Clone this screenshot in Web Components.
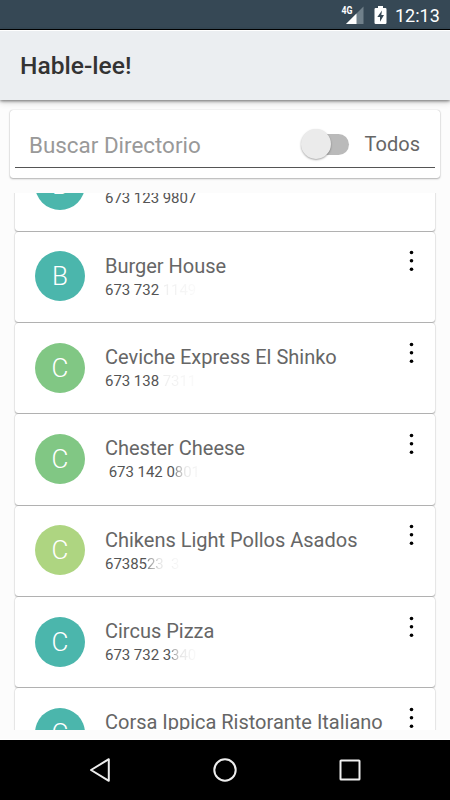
<!DOCTYPE html>
<html lang="es"><head><meta charset="utf-8"><title>Hable-lee!</title>
<style>html,body{margin:0;height:800px;overflow:hidden;background:#fcfcfc}body{font-family:Roboto,"Liberation Sans",sans-serif}</style></head>
<body><phone-screen></phone-screen>
<script>
const define = (name, html, setup) => {
  const t = document.createElement('template');
  t.innerHTML = html;
  customElements.define(name, class extends HTMLElement {
    connectedCallback() {
      if (this.shadowRoot) return;
      this.attachShadow({mode: 'open'}).append(t.content.cloneNode(true));
      if (setup) setup(this, this.shadowRoot);
    }
  });
};

define('status-bar', `<style>
:host{display:flex;background:#364855;border-bottom:1px solid #000;color:#fff;justify-content:flex-end;align-items:flex-start;box-sizing:border-box;height:30px;padding-right:10px}
svg{display:block}
.sig{margin-right:10px}.bat{margin:6px 8px 0 0}
span{font-size:18px;line-height:32px;font-weight:400;width:45px;white-space:nowrap}
</style>
<svg class="sig" width="24" height="29" viewBox="0 0 24 29"><path d="M23.5 6.5V24H6Z" fill="#70808a"/><path d="M16.5 13.5V24H6Z" fill="#fff"/><text x="1.5" y="13.7" font-size="10.5" font-weight="700" textLength="11" lengthAdjust="spacingAndGlyphs" fill="#fff">4G</text></svg>
<svg class="bat" width="13" height="19" viewBox="0 0 13 19"><path d="M4 0h5v2h2.3Q12.5 2 12.5 3.2V16.8Q12.5 18 11.3 18H1.7Q.5 18 .5 16.8V3.2Q.5 2 1.7 2H4Z" fill="#fff"/><path d="M8 4.5 3.3 11H6V15.7L10 9H7.3Z" fill="#364855"/></svg>
<span>12:13</span>`);

define('app-bar', `<style>
:host{display:flex;position:relative;align-items:center;height:70px;box-sizing:border-box;padding:0 20px 1px;background:#ebeef1;border-top:1px solid #fff;box-shadow:0 1px 3px rgba(0,0,0,.5),0 3px 6px rgba(0,0,0,.13);color:#333;font-size:24.6px;font-weight:500;white-space:nowrap}
</style><slot></slot>`);

define('toggle-switch', `<style>
:host{display:grid;width:50px;height:32px;align-items:center}
i,b{grid-area:1/1;display:block}
i{width:38px;height:21px;border-radius:11px;background:#bababa;justify-self:end;margin-right:2px}
b{width:30px;height:30px;border-radius:50%;background:#ebebeb;box-shadow:0 1px 2px rgba(0,0,0,.35);z-index:1}
</style><i></i><b></b>`);

define('search-card', `<style>
:host{display:block;margin:10px 10px 0;height:68px;box-sizing:border-box;padding:0 5px;background:#fff;border-radius:3px;box-shadow:0 0 1px rgba(0,0,0,.3),0 1px 2px rgba(0,0,0,.28)}
div{display:flex;align-items:center;border-bottom:1px solid #555;box-sizing:border-box;height:58px;padding:12px 15px 0 14px;white-space:nowrap}
.h{color:#999;font-size:22.4px;flex:1}
toggle-switch{margin-top:-1px}
.t{color:#666;font-size:20px;margin-left:14px;margin-top:-2px}
</style><div><span class="h">Buscar Directorio</span><toggle-switch></toggle-switch><span class="t">Todos</span></div>`);

define('contact-card', `<style>
:host{display:flex;flex:none;height:90.3px;box-sizing:border-box;background:#fff;border-radius:3px;box-shadow:0 0 1px rgba(0,0,0,.3),0 1px 1.5px rgba(0,0,0,.3);padding:20px 20px 0}
.a{width:50px;height:50px;border-radius:50%;color:#fff;font-size:26px;font-weight:300;line-height:51px;text-align:center;flex:none;margin-top:-.4px}
.m{flex:1;margin-left:20px;white-space:nowrap}
.n{font-size:20px;line-height:24px;height:24px;margin-top:2px;color:#666;letter-spacing:-.01px}
.p{font-size:15px;line-height:20px;margin-top:2px;color:#555;white-space:pre;letter-spacing:-.04px}
.f{color:transparent;background-clip:text;-webkit-background-clip:text}
svg{display:block;flex:none;margin:-1.4px 1px 0 0}
</style><div class="a"></div><div class="m"><div class="n"></div><div class="p"><span class="v"></span><span class="f"></span></div></div>
<svg width="5" height="22" viewBox="0 0 5 22"><g fill="#000"><circle cx="2.5" cy="2.5" r="1.8"/><circle cx="2.5" cy="10.8" r="1.8"/><circle cx="2.5" cy="19.2" r="1.8"/></g></svg>`, (el, r) => {
  const a = n => el.getAttribute(n) || '';
  r.querySelector('.a').textContent = a('letter');
  r.querySelector('.a').style.background = a('color');
  r.querySelector('.n').textContent = a('name');
  r.querySelector('.v').textContent = a('phone');
  const f = r.querySelector('.f');
  f.textContent = a('tail');
  f.style.backgroundImage = a('fade') === 'long' ? 'linear-gradient(90deg,#888,#e6e6e6 40%,#fafafa)' : 'linear-gradient(90deg,#eee,#fafafa)';
});

define('contact-list', `<style>
:host{display:block;height:537px;margin:15px 0 0;padding:0 15px;overflow:hidden}
div{display:flex;flex-direction:column;gap:1px;margin-top:-52.6px}
</style><div><slot></slot></div>`);

define('nav-bar', `<style>
:host{display:flex;justify-content:center;align-items:center;gap:101px;height:60px;background:#000;box-shadow:0 -1px #fff;margin-top:10px}
svg{width:24px;height:24px;fill:none;stroke:#eee;stroke-width:2}
</style>
<svg viewBox="0 0 24 24"><path d="M20.8 1.2V22.8L3 12Z" stroke-linejoin="round"/></svg>
<svg viewBox="0 0 24 24"><circle cx="12" cy="12" r="10.7"/></svg>
<svg viewBox="0 0 24 24"><rect x="2.5" y="2.5" width="19" height="19" rx=".6"/></svg>`);

define('phone-screen', `<style>:host{display:flex;flex-direction:column;width:450px;height:800px;overflow:hidden;background:#fcfcfc}</style>
<status-bar></status-bar><app-bar>Hable-lee!</app-bar><search-card></search-card>
<contact-list>
<contact-card letter="B" color="#4bb6ac" name="" phone="673 123 9807"></contact-card>
<contact-card letter="B" color="#4bb6ac" name="Burger House" phone="673 732 " tail="1149"></contact-card>
<contact-card letter="C" color="#81c784" name="Ceviche Express El Shinko" phone="673 138 " tail="7311"></contact-card>
<contact-card letter="C" color="#81c784" name="Chester Cheese" phone=" 673 142 0" tail="801" fade="long"></contact-card>
<contact-card letter="C" color="#aed581" name="Chikens Light Pollos Asados" phone="67385" tail="23  3" fade="long"></contact-card>
<contact-card letter="C" color="#4bb6ac" name="Circus Pizza" phone="673 732 3" tail="340" fade="long"></contact-card>
<contact-card letter="C" color="#4bb6ac" name="Corsa Ippica Ristorante Italiano"></contact-card>
</contact-list><nav-bar></nav-bar>`);
</script></body></html>
